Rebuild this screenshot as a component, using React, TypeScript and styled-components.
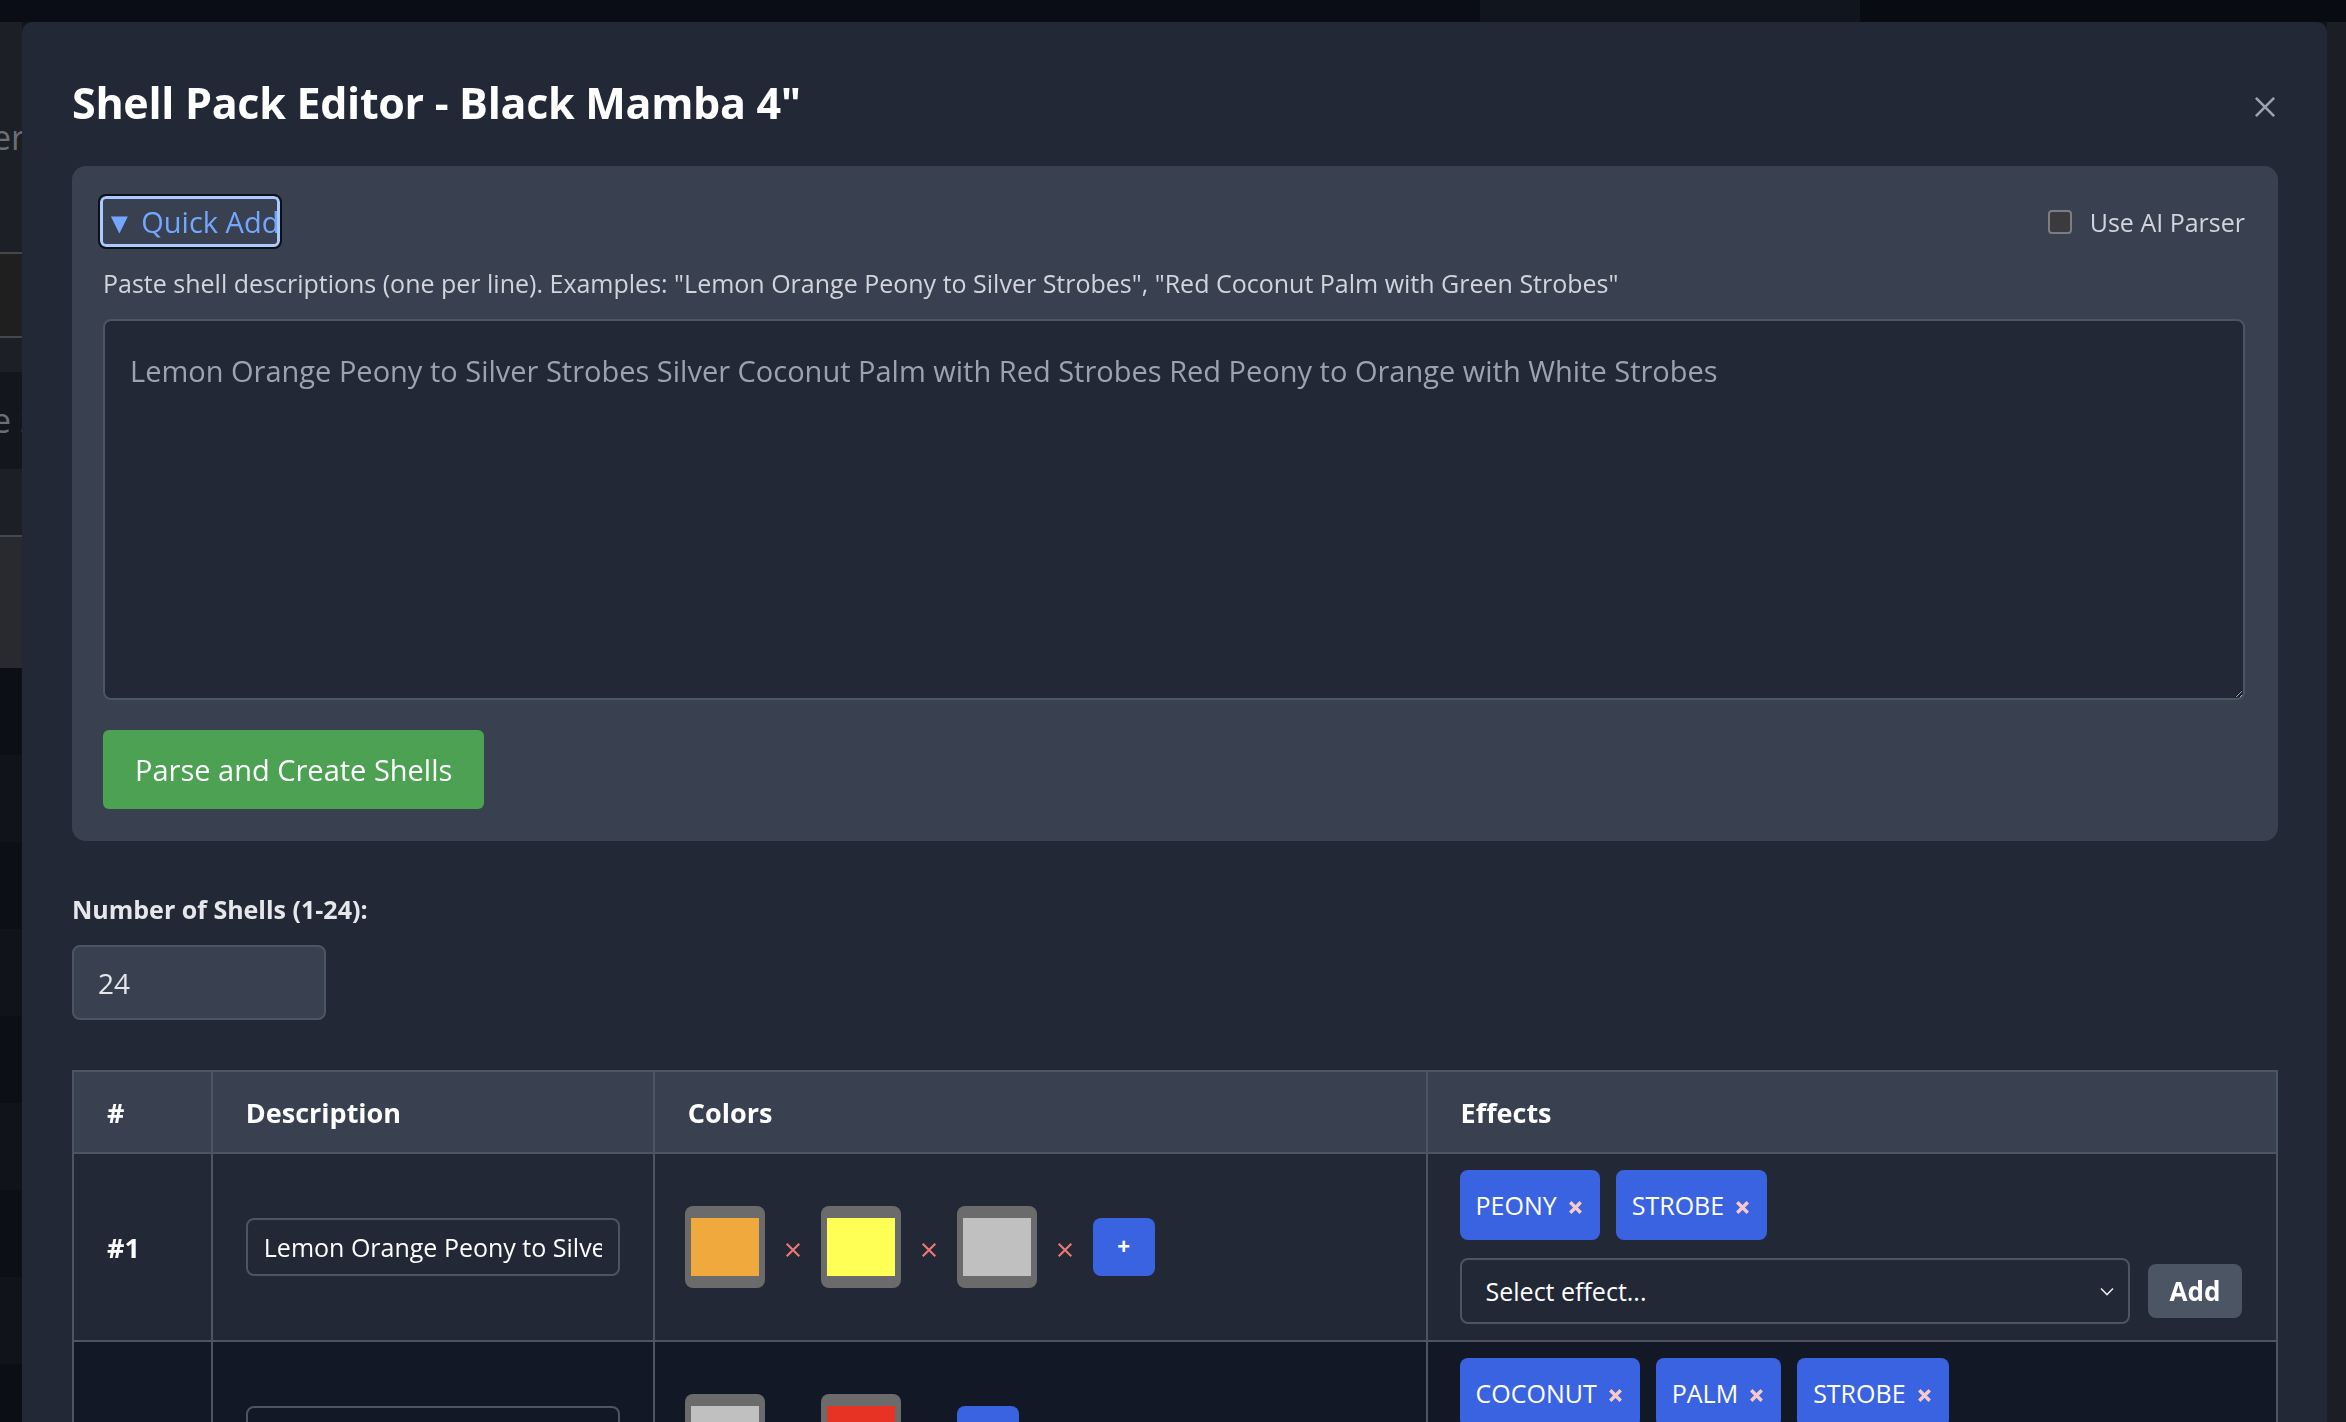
import styled, { createGlobalStyle } from 'styled-components';

const GlobalStyle = createGlobalStyle`
  html, body {
    margin: 0;
    height: 100%;
    overflow: hidden;
    background: #0b0e15;
    font-family: "Open Sans", "Noto Sans", "Liberation Sans", sans-serif;
  }
  * { box-sizing: border-box; }
`

/* ---- the page behind the dialog (dimmed) ---- */

const BackPage = styled.div`
  display: flex;
  flex-direction: column;
  height: 100vh;
`

const TopBar = styled.div`
  display: flex;
  height: 22px;
  background: #0a0d15;
`

const TopTab = styled.div<{ $w: number; $bg: string }>`
  width: ${p => p.$w}px;
  background: ${p => p.$bg};
`

const BackBody = styled.div`
  flex: 1;
  display: flex;
`

const LeftRail = styled.div`
  width: 22px;
  display: flex;
  flex-direction: column;
  overflow: hidden;
`

const RailStrip = styled.div<{ $h: number; $bg: string; $line?: boolean }>`
  height: ${p => p.$h}px;
  flex-shrink: 0;
  background: ${p => p.$bg};
  border-top: ${p => (p.$line ? '2px solid #45474c' : 'none')};
  color: #6b6e75;
  font-size: 34px;
  line-height: ${p => p.$h}px;
  white-space: nowrap;
  text-indent: -8px;
`

const BackFill = styled.div`
  flex: 1;
  background: #12151c;
`

const RightRail = styled.div`
  width: 19px;
  background: #1b1e25;
`

/* ---- dialog ---- */

const Modal = styled.div`
  position: fixed;
  top: 22px;
  left: 22px;
  right: 19px;
  bottom: -60px;
  background: #222836;
  border-radius: 10px;
  padding: 58px 49px 0 50px;
  overflow: hidden;
`

const ModalHeader = styled.div`
  display: flex;
  align-items: center;
  justify-content: space-between;
  height: 46px;
  margin-bottom: 40px;
`

const Title = styled.h2`
  margin: 0;
  font-size: 43px;
  line-height: 46px;
  font-weight: 700;
  color: #ffffff;
  letter-spacing: -0.3px;
`

const CloseButton = styled.button`
  display: flex;
  background: none;
  border: none;
  padding: 0;
  margin: 8px 0 0 0;
  cursor: pointer;
`

const QuickPanel = styled.section`
  display: flex;
  flex-direction: column;
  background: #394151;
  border-radius: 14px;
  padding: 30px 33px 32px 31px;
`

const PanelTop = styled.div`
  display: flex;
  align-items: center;
  justify-content: space-between;
  height: 51px;
`

const QuickToggle = styled.button`
  height: 51px;
  width: 180px;
  margin-left: -3px;
  padding: 0 2px;
  overflow: hidden;
  white-space: nowrap;
  text-align: left;
  background: transparent;
  color: #72a6ff;
  font-family: inherit;
  font-size: 29px;
  border: 3px solid #a9c9ff;
  outline: 2px solid #0c1018;
  border-radius: 6px;
`

const CheckLabel = styled.label`
  display: flex;
  align-items: center;
  gap: 18px;
  color: #d1d5db;
  font-size: 25px;
`

const CheckBox = styled.span`
  width: 24px;
  height: 24px;
  border-radius: 4px;
  background: #3b3b3d;
  border: 2px solid #7b7d82;
`

const Hint = styled.p`
  margin: 18px 0;
  font-size: 25px;
  line-height: 36px;
  color: #d1d5db;
  white-space: nowrap;
`

const QuickText = styled.textarea`
  height: 381px;
  width: 100%;
  background: #222836;
  border: 2px solid #4b5563;
  border-radius: 8px;
  padding: 30px 25px;
  font-family: inherit;
  font-size: 29px;
  color: #e5e7eb;
  &::placeholder { color: #9ca3af; }
`

const ParseButton = styled.button`
  align-self: flex-start;
  margin-top: 30px;
  height: 79px;
  padding: 0 32px;
  background: #4ca153;
  color: #ffffff;
  border: none;
  border-radius: 6px;
  font-family: inherit;
  font-size: 29px;
`

const FieldLabel = styled.div`
  margin: 56px 0 24px;
  font-size: 25px;
  line-height: 24px;
  font-weight: 700;
  color: #e5e7eb;
`

const CountInput = styled.input`
  width: 254px;
  height: 75px;
  background: #394151;
  border: 2px solid #4b5563;
  border-radius: 8px;
  padding: 0 24px;
  font-family: inherit;
  font-size: 28px;
  color: #e5e7eb;
`

const ShellTable = styled.table`
  margin-top: 50px;
  width: 100%;
  border-collapse: collapse;
  border: 2px solid #4b5563;
`

const HeadCell = styled.th`
  height: 82px;
  padding: 0 33px;
  background: #394151;
  border: 2px solid #4b5563;
  text-align: left;
  font-size: 27px;
  font-weight: 700;
  color: #ffffff;
`

const Row = styled.tr<{ $alt?: boolean }>`
  background: ${p => (p.$alt ? '#131826' : '#222836')};
`

const Cell = styled.td`
  height: 187px;
  padding: 0 33px;
  border: 2px solid #4b5563;
  vertical-align: middle;
  color: #ffffff;
`

const EffectCell = styled(Cell)`
  padding: 16px 34px 16px 32px;
`

const Num = styled.span`
  font-size: 27px;
  font-weight: 700;
`

const DescInput = styled.input`
  width: 374px;
  height: 58px;
  background: transparent;
  border: 2px solid #4b5563;
  border-radius: 8px;
  padding: 0 16px;
  font-family: inherit;
  font-size: 25px;
  color: #ffffff;
`

const ColorRow = styled.div`
  display: flex;
  align-items: center;
  gap: 19px;
  margin-left: -3px;
`

const Swatch = styled.div<{ $c: string }>`
  width: 80px;
  height: 82px;
  padding: 12px 6px;
  border-radius: 8px;
  background: #6b6b6b;
  &::after {
    content: '';
    display: block;
    width: 100%;
    height: 100%;
    background: ${p => p.$c};
  }
`

const RemoveColor = styled.span`
  display: flex;
  width: 18px;
  margin-top: 6px;
`

const AddColor = styled.button`
  width: 62px;
  height: 58px;
  border: none;
  border-radius: 8px;
  background: #3a63e1;
  color: #ffffff;
  font-size: 22px;
  font-weight: 700;
`

const TagList = styled.div`
  display: flex;
  gap: 16px;
`

const Tag = styled.span`
  display: inline-flex;
  align-items: center;
  gap: 11px;
  height: 70px;
  padding: 0 17px 0 16px;
  border-radius: 8px;
  background: #3a63e1;
  color: #ffffff;
  font-size: 25px;
`

const TagX = styled.span`
  display: flex;
  margin-top: 5px;
`

const SelectRow = styled.div`
  display: flex;
  align-items: center;
  gap: 18px;
  margin-top: 18px;
`

const SelectBox = styled.div`
  flex: 1;
  height: 66px;
  display: flex;
  align-items: center;
  justify-content: space-between;
  padding: 0 12px 0 24px;
  border: 2px solid #4b5563;
  border-radius: 8px;
  background: #222836;
  font-size: 25px;
  color: #ffffff;
`

const AddButton = styled.button`
  width: 94px;
  height: 54px;
  border: none;
  border-radius: 8px;
  background: #4b5563;
  color: #ffffff;
  font-family: inherit;
  font-size: 26px;
  font-weight: 700;
`

type Shell = { desc: string; colors: string[]; effects: string[] };

const shells: Shell[] = [
  { desc: 'Lemon Orange Peony to Silver Strobes', colors: ['#f0a93c', '#ffff55', '#c0c0c0'], effects: ['PEONY', 'STROBE'] },
  { desc: 'Silver Coconut Palm with Red Strobes', colors: ['#c0c0c0', '#e63324'], effects: ['COCONUT', 'PALM', 'STROBE'] },
];

const railStrips = [
  { h: 230, bg: '#1c1f26', text: 'er' },
  { h: 84, bg: '#1f1f1f', line: true },
  { h: 36, bg: '#1c1f26', line: true },
  { h: 97, bg: '#13161d', text: 'e S' },
  { h: 66, bg: '#1c1f26' },
  { h: 133, bg: '#282a2f', line: true },
  { h: 87, bg: '#0c0f16' },
  { h: 87, bg: '#10131a' },
  { h: 87, bg: '#0c0f16' },
  { h: 87, bg: '#10131a' },
  { h: 87, bg: '#0c0f16' },
  { h: 87, bg: '#10131a' },
  { h: 87, bg: '#0c0f16' },
  { h: 87, bg: '#10131a' },
];

function Cross({ size, color, width }: { size: number; color: string; width: number }) {
  return (
    <svg width={size} height={size} viewBox="0 0 20 20" fill="none" stroke={color} strokeWidth={width} strokeLinecap="butt">
      <path d="M3 3 L17 17 M17 3 L3 17" />
    </svg>
  );
}

function Chevron() {
  return (
    <svg width="18" height="18" viewBox="0 0 18 18" fill="none" stroke="#e5e7eb" strokeWidth="1.6">
      <path d="M3 6.5 L9 12.5 L15 6.5" />
    </svg>
  );
}

function ShellRow({ shell, index }: { shell: Shell; index: number }) {
  return (
    <Row $alt={index % 2 === 1}>
      <Cell><Num>#{index + 1}</Num></Cell>
      <Cell><DescInput defaultValue={shell.desc} /></Cell>
      <Cell>
        <ColorRow>
          {shell.colors.map((c, i) => [
            <Swatch key={'s' + i} $c={c} />,
            <RemoveColor key={'x' + i}><Cross size={18} color="#ee7676" width={2.4} /></RemoveColor>,
          ])}
          <AddColor>+</AddColor>
        </ColorRow>
      </Cell>
      <EffectCell>
        <TagList>
          {shell.effects.map(e => (
            <Tag key={e}>{e}<TagX><Cross size={15} color="#f7c9c9" width={4.5} /></TagX></Tag>
          ))}
        </TagList>
        <SelectRow>
          <SelectBox>Select effect...<Chevron /></SelectBox>
          <AddButton>Add</AddButton>
        </SelectRow>
      </EffectCell>
    </Row>
  );
}

export default function App() {
  return (
    <>
      <GlobalStyle />
      <BackPage>
        <TopBar>
          <TopTab $w={1480} $bg="#0a0d15" />
          <TopTab $w={380} $bg="#10151e" />
          <TopTab $w={486} $bg="#080b12" />
        </TopBar>
        <BackBody>
          <LeftRail>
            {railStrips.map((s, i) => (
              <RailStrip key={i} $h={s.h} $bg={s.bg} $line={s.line}>{s.text}</RailStrip>
            ))}
          </LeftRail>
          <BackFill />
          <RightRail />
        </BackBody>
      </BackPage>

      <Modal>
        <ModalHeader>
          <Title>Shell Pack Editor - Black Mamba 4"</Title>
          <CloseButton><Cross size={26} color="#9ca3af" width={2} /></CloseButton>
        </ModalHeader>

        <QuickPanel>
          <PanelTop>
            <QuickToggle>▼ Quick Add</QuickToggle>
            <CheckLabel><CheckBox />Use AI Parser</CheckLabel>
          </PanelTop>
          <Hint>
            Paste shell descriptions (one per line). Examples: "Lemon Orange Peony to Silver Strobes", "Red Coconut Palm with Green Strobes"
          </Hint>
          <QuickText placeholder="Lemon Orange Peony to Silver Strobes Silver Coconut Palm with Red Strobes Red Peony to Orange with White Strobes" />
          <ParseButton>Parse and Create Shells</ParseButton>
        </QuickPanel>

        <FieldLabel>Number of Shells (1-24):</FieldLabel>
        <CountInput defaultValue="24" />

        <ShellTable>
          <colgroup>
            <col style={{ width: 139 }} />
            <col style={{ width: 441 }} />
            <col style={{ width: 774 }} />
            <col style={{ width: 852 }} />
          </colgroup>
          <thead>
            <tr>
              <HeadCell>#</HeadCell>
              <HeadCell>Description</HeadCell>
              <HeadCell>Colors</HeadCell>
              <HeadCell>Effects</HeadCell>
            </tr>
          </thead>
          <tbody>
            {shells.map((s, i) => <ShellRow key={i} shell={s} index={i} />)}
          </tbody>
        </ShellTable>
      </Modal>
    </>
  );
}
